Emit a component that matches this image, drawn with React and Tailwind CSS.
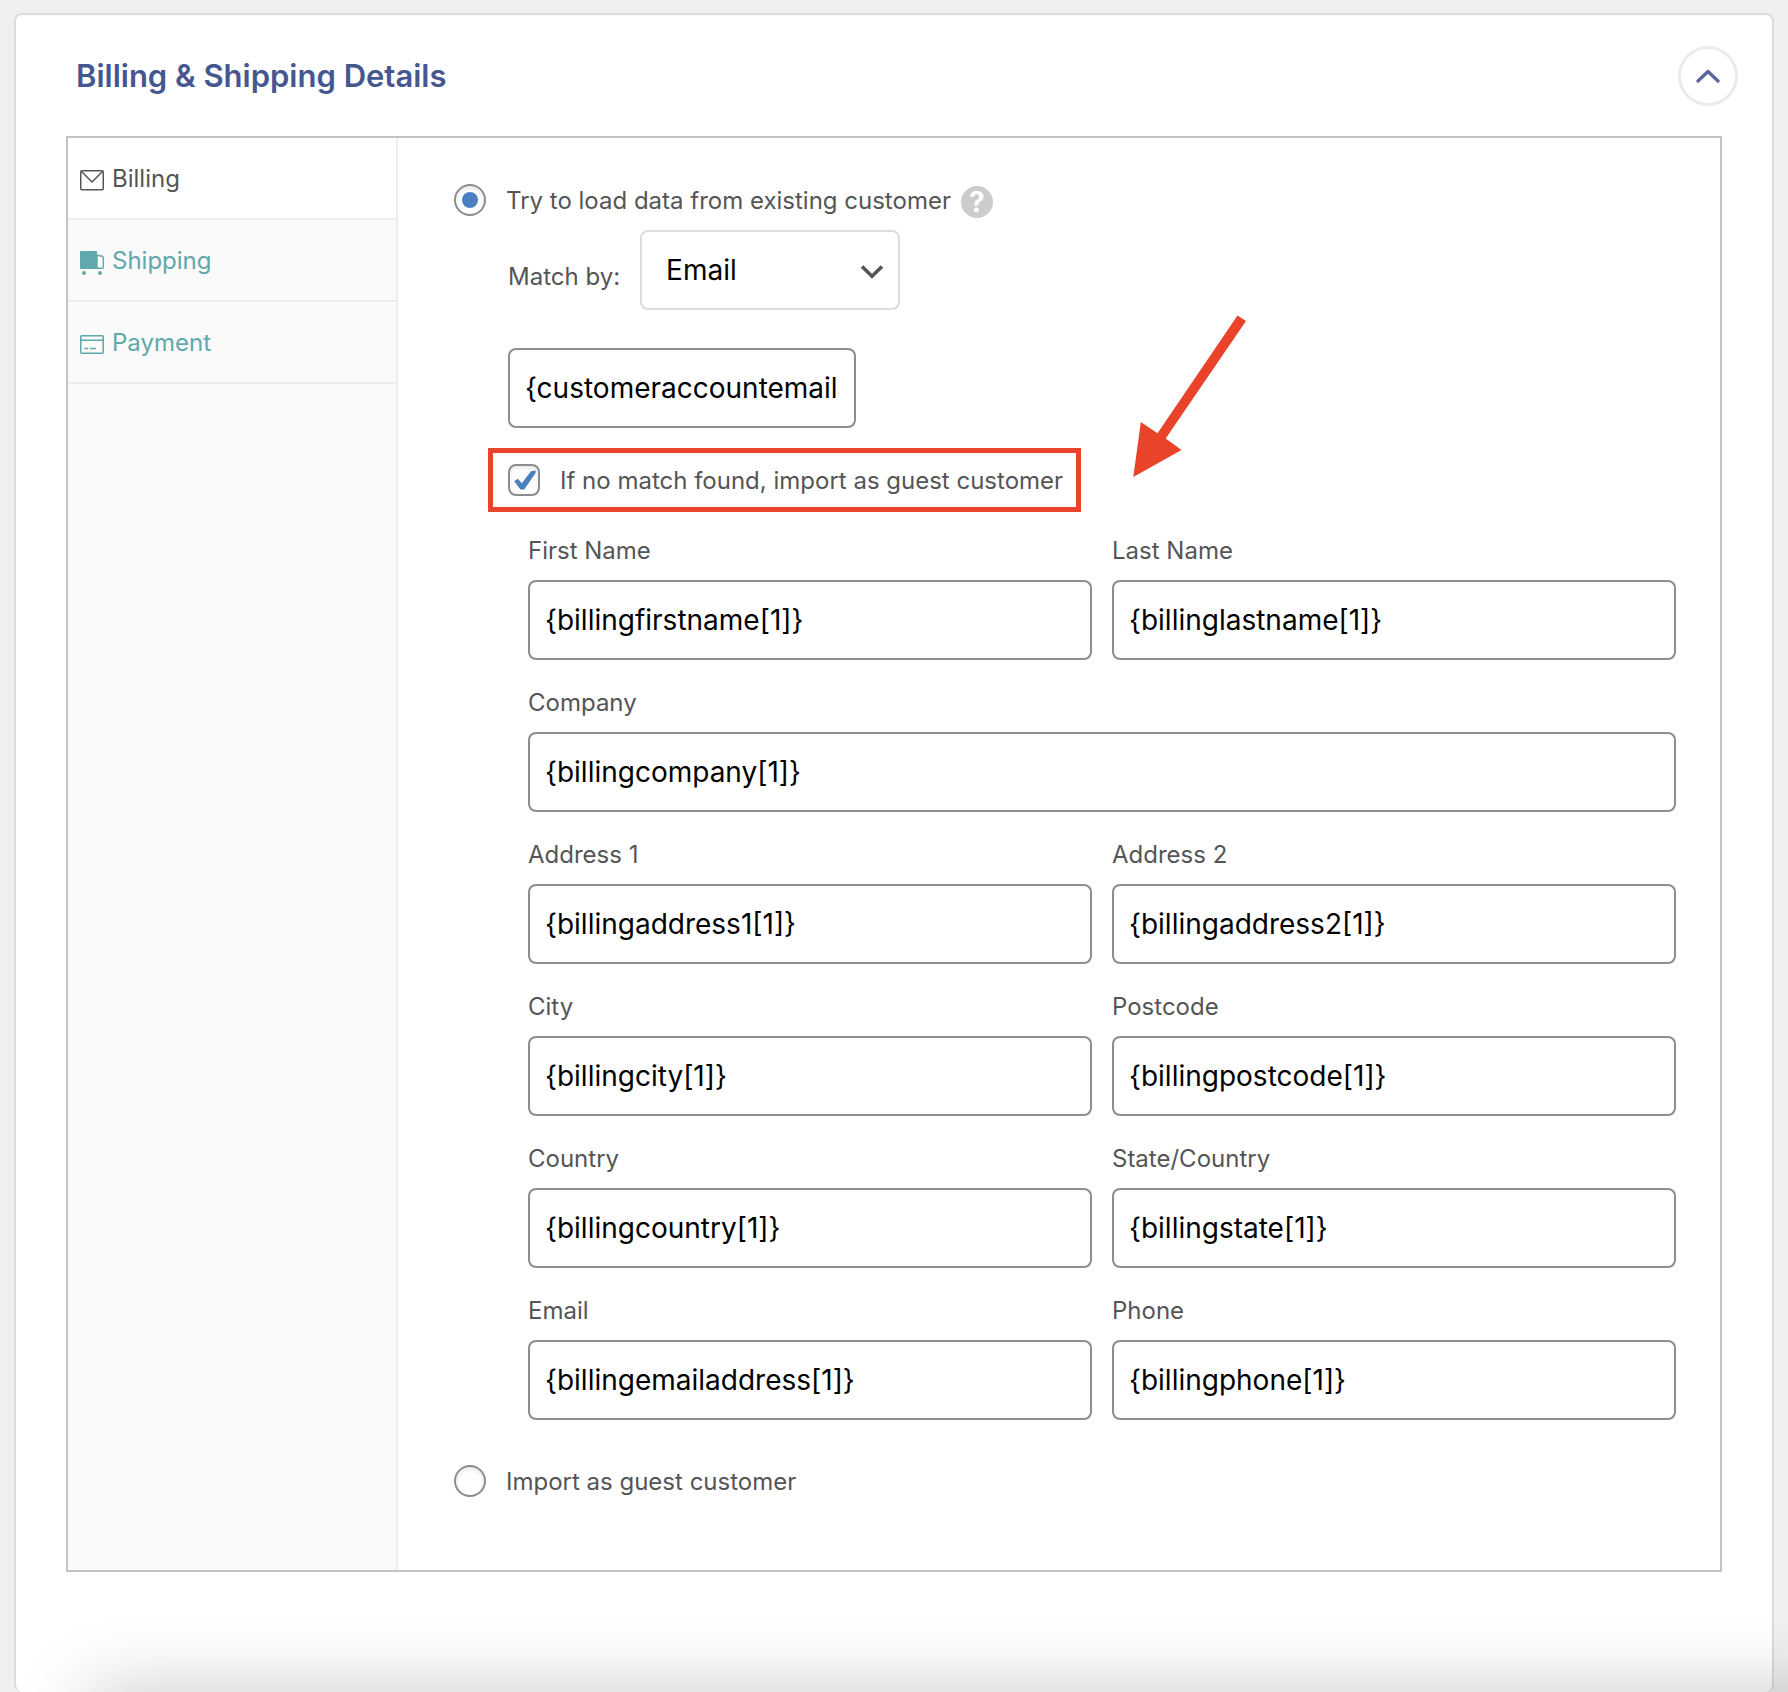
import { useState } from 'react';

const TABS = [
  { id: 'billing', label: 'Billing', Icon: EnvelopeIcon },
  { id: 'shipping', label: 'Shipping', Icon: TruckIcon },
  { id: 'payment', label: 'Payment', Icon: CardIcon },
];

const FIELDS = [
  { id: 'first_name', label: 'First Name', value: '{billingfirstname[1]}' },
  { id: 'last_name', label: 'Last Name', value: '{billinglastname[1]}' },
  { id: 'company', label: 'Company', value: '{billingcompany[1]}', wide: true },
  { id: 'address_1', label: 'Address 1', value: '{billingaddress1[1]}' },
  { id: 'address_2', label: 'Address 2', value: '{billingaddress2[1]}' },
  { id: 'city', label: 'City', value: '{billingcity[1]}' },
  { id: 'postcode', label: 'Postcode', value: '{billingpostcode[1]}' },
  { id: 'country', label: 'Country', value: '{billingcountry[1]}' },
  { id: 'state', label: 'State/Country', value: '{billingstate[1]}' },
  { id: 'email', label: 'Email', value: '{billingemailaddress[1]}' },
  { id: 'phone', label: 'Phone', value: '{billingphone[1]}' },
];

const INPUT = 'h-20 rounded-lg border-2 border-[#8c8c91] bg-white px-[15px] text-[28px] text-black outline-none';

export default function App() {
  const [tab, setTab] = useState('billing');
  const [source, setSource] = useState('existing');
  const [guestFallback, setGuestFallback] = useState(true);

  return (
    <div className="relative min-h-screen overflow-hidden bg-[#f0f0f1] px-[14px] pt-[13px] font-['Inter',sans-serif] text-2xl text-[#555]">
      <section className="rounded-lg border-2 border-b-0 border-[#dcdcde] bg-white pb-[120px]">
        <header className="flex items-center justify-between pt-[31px] pr-[34px] pb-[30px] pl-[60px]">
          <h2 className="text-[31px] font-semibold text-[#46578f]">Billing &amp; Shipping Details</h2>
          <button type="button" aria-label="Collapse" className="flex size-[60px] items-center justify-center rounded-full border-[3px] border-[#ebebec] bg-white">
            <svg width="24" height="14" viewBox="0 0 24 14" fill="none" stroke="#5a68a0" strokeWidth="3.4" strokeLinecap="round" strokeLinejoin="round">
              <path d="M2 12 12 2.4 22 12" />
            </svg>
          </button>
        </header>

        <div className="mx-[50px] flex border-2 border-[#c3c4c7]">
          <nav role="tablist" className="w-[330px] shrink-0 border-r-2 border-[#eee] bg-[#fafafa]">
            {TABS.map(({ id, label, Icon }) => (
              <button key={id} type="button" role="tab" aria-selected={tab === id} onClick={() => setTab(id)}
                className={`flex h-[82px] w-full items-center gap-2 border-b-2 border-[#eee] px-3 pt-0.5 ${tab === id ? 'bg-white text-[#555]' : 'text-[#5fa8ab]'}`}>
                <Icon />
                {label}
              </button>
            ))}
          </nav>

          <div className="min-w-0 flex-1 pt-[46px] pr-11 pb-[73px] pl-14">
            <div className="flex h-8 items-center">
              <Radio id="src_existing" checked={source === 'existing'} onChange={() => setSource('existing')} />
              <label htmlFor="src_existing" className="pt-0.5 pl-5">Try to load data from existing customer</label>
              <HelpIcon />
            </div>

            <div className="pl-[54px]">
              <div className="mt-[14px] flex items-center gap-5">
                <label htmlFor="match_by" className="pt-[14px]">Match by:</label>
                <div className="relative">
                  <select id="match_by" defaultValue="email" className="h-20 w-[260px] appearance-none rounded-lg border-2 border-[#dcdcde] bg-white px-6 pt-0.5 text-[28px] text-black outline-none">
                    <option value="email">Email</option>
                  </select>
                  <svg className="pointer-events-none absolute top-[34px] right-4" width="24" height="16" viewBox="0 0 24 16" fill="none" stroke="#555" strokeWidth="3.6">
                    <path d="M2 2.5 12 12.2 22 2.5" />
                  </svg>
                </div>
              </div>

              <input aria-label="Customer email" defaultValue="{customeraccountemailaddress[1]}" className={`${INPUT} mt-[38px] block w-[348px]`} />

              <div className="mt-5 -ml-5 inline-flex items-center border-[5px] border-[#e9432a] py-[11px] pr-[13px] pl-[15px]">
                <span className="relative flex size-8">
                  <input id="guest_fallback" type="checkbox" checked={guestFallback} onChange={e => setGuestFallback(e.target.checked)}
                    className="size-8 appearance-none rounded-lg border-2 border-[#8c8c91] bg-white shadow-[inset_0_2px_4px_rgba(0,0,0,0.1)]" />
                  {guestFallback && (
                    <svg className="pointer-events-none absolute inset-0" width="32" height="32" viewBox="0 0 32 32" fill="#4a7fc1">
                      <path d="M6.200 17.200 9 15.200Q9.900 14.700 10.600 15.500L13.800 19.200 23 7.200 27.600 6.600V9L16.200 25.400H12.400Z" />
                    </svg>
                  )}
                </span>
                <label htmlFor="guest_fallback" className="pt-0.5 pl-5 leading-[30px]">If no match found, import as guest customer</label>
              </div>

              <div className="mt-6 grid grid-cols-2 gap-x-5 gap-y-7 pl-5">
                {FIELDS.map(f => (
                  <div key={f.id} className={`flex flex-col gap-[14px] ${f.wide ? 'col-span-2' : ''}`}>
                    <label htmlFor={f.id} className="leading-[30px]">{f.label}</label>
                    <input id={f.id} defaultValue={f.value} className={`${INPUT} w-full`} />
                  </div>
                ))}
              </div>
            </div>

            <div className="mt-[45px] flex h-8 items-center">
              <Radio id="src_guest" checked={source === 'guest'} onChange={() => setSource('guest')} />
              <label htmlFor="src_guest" className="pt-0.5 pl-5">Import as guest customer</label>
            </div>
          </div>
        </div>
      </section>

      <Arrow />

      {/* Shadow cast by the bar under the panel */}
      <div className="pointer-events-none absolute top-full -right-20 left-[90px] h-40 shadow-[0_0_76px_0_rgba(0,0,0,0.22)]" />
    </div>
  );
}

function Radio({ id, checked, onChange }) {
  return (
    <span className="relative flex size-8 shrink-0">
      <input id={id} type="radio" name="customer_source" checked={checked} onChange={onChange}
        className="size-8 appearance-none rounded-full border-2 border-[#8c8c91] bg-white shadow-[inset_0_2px_4px_rgba(0,0,0,0.1)]" />
      {checked && <span className="pointer-events-none absolute inset-2 rounded-full bg-[#4a7fc1]" />}
    </span>
  );
}

function HelpIcon() {
  return (
    <button type="button" aria-label="Help" className="mt-1 ml-[10px] flex size-8 items-center justify-center rounded-full bg-[#ccc] text-[28px] leading-8 font-bold text-white">
      ?
    </button>
  );
}

// Callout arrow floating over the form
function Arrow() {
  return (
    <svg className="pointer-events-none absolute top-[315px] left-[1133px]" width="114" height="163" viewBox="0 0 114 163" fill="#e9432a">
      <path d="M104.500 .500 113 6 32.700 123.500 48.500 135 .300 162 7.800 107 24.500 118.300Z" />
    </svg>
  );
}

function EnvelopeIcon() {
  return (
    <svg width="24" height="24" viewBox="0 0 24 24" fill="none" stroke="currentColor" strokeWidth="1.5" className="mt-1">
      <rect x=".75" y="1.750" width="22.500" height="19" rx="1" />
      <path d="M1.500 2.500 12 13 22.500 2.500" />
    </svg>
  );
}

function TruckIcon() {
  return (
    <svg width="24" height="24" viewBox="0 0 24 24" fill="currentColor" className="mt-1">
      <path d="M1 0h15a1 1 0 0 1 1 1v17H1a1 1 0 0 1-1-1V1a1 1 0 0 1 1-1Z" />
      <path d="M17 4.300 22.300 5.300Q23.300 5.500 23.300 6.500V16.300Q23.300 17.300 22.300 17.300H17Z" fill="none" stroke="currentColor" strokeWidth="1.400" />
      <circle cx="4" cy="22" r="2" />
      <circle cx="20" cy="22" r="2" />
    </svg>
  );
}

function CardIcon() {
  return (
    <svg width="24" height="24" viewBox="0 0 24 24" fill="none" stroke="currentColor" strokeWidth="1.5" className="mt-1">
      <rect x=".75" y="2.750" width="22.500" height="17.500" rx="1" />
      <path d="M1 7.200h22M4.300 15.500h4M10 15.500h6" />
    </svg>
  );
}
